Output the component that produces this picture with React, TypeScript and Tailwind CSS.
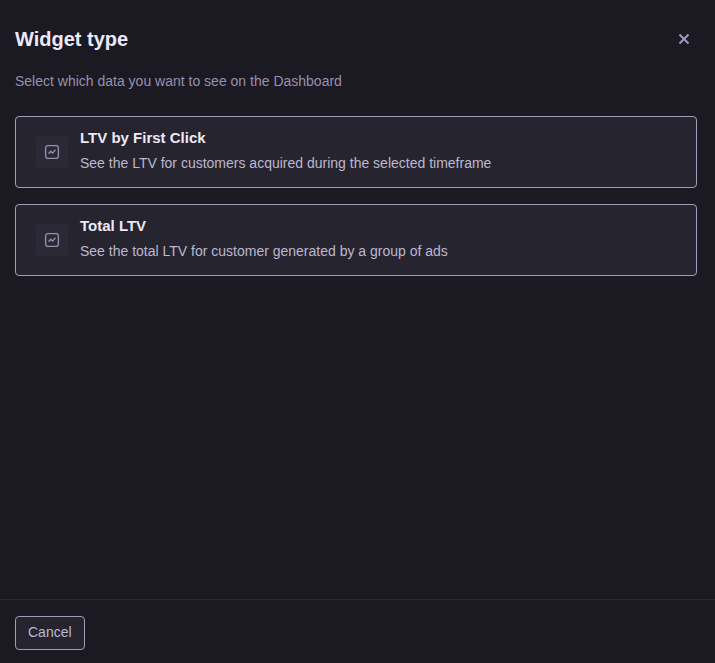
const widgets = [
  {
    title: 'LTV by First Click',
    description: 'See the LTV for customers acquired during the selected timeframe',
  },
  {
    title: 'Total LTV',
    description: 'See the total LTV for customer generated by a group of ads',
  },
];

function ChartIcon() {
  return (
    <svg
      className="size-4"
      viewBox="0 0 16 16"
      fill="none"
      stroke="currentColor"
      strokeLinecap="round"
      strokeLinejoin="round"
      aria-hidden="true"
    >
      <rect x="1.6" y="1.6" width="12.8" height="12.8" rx="2.4" strokeWidth="1.4" />
      <path d="M4.9 9.3 6.7 7.2l1.7 1.9 2.7-2.9" strokeWidth="1.4" />
    </svg>
  );
}

function CloseIcon() {
  return (
    <svg className="size-4" viewBox="0 0 16 16" fill="none" stroke="currentColor" strokeWidth="2" aria-hidden="true">
      <path d="m3.5 3.5 9 9M12.5 3.5l-9 9" />
    </svg>
  );
}

export default function App() {
  return (
    <div className="flex min-h-screen flex-col bg-[#1b1922] font-['Liberation_Sans',Arial,sans-serif] text-[#bcb8d2]">
      <main className="flex-1 pt-6 pr-[18px] pl-[15px]">
        <header className="flex items-center justify-between">
          <h1 className="text-xl leading-[30px] font-bold text-[#ebe9fa]">Widget type</h1>
          <button type="button" aria-label="Close" className="mr-[5px] text-[#a19bba]">
            <CloseIcon />
          </button>
        </header>
        <p className="mt-4 text-sm leading-[22px] text-[#9691ae]">
          Select which data you want to see on the Dashboard
        </p>
        <div className="mt-6 flex flex-col gap-4">
          {widgets.map((widget) => (
            <button
              key={widget.title}
              type="button"
              className="flex h-[72px] w-full items-center gap-3 rounded border border-[#a19bba] bg-[#26242e] px-5 text-left"
            >
              <span className="flex size-8 shrink-0 items-center justify-center rounded bg-[#2c2937] text-[#928da9]">
                <ChartIcon />
              </span>
              <span className="flex flex-col gap-0.5 pb-1">
                <span className="text-[15px] leading-6 font-bold text-[#ebe9fa]">{widget.title}</span>
                <span className="text-sm leading-[22px]">{widget.description}</span>
              </span>
            </button>
          ))}
        </div>
      </main>
      <footer className="border-t border-[#2c2937] pt-4 pr-[18px] pb-[13px] pl-[15px]">
        <button
          type="button"
          className="h-[34px] rounded border border-[#a19bba] bg-[#26242e] px-3 pb-0.5 text-sm"
        >
          Cancel
        </button>
      </footer>
    </div>
  );
}
